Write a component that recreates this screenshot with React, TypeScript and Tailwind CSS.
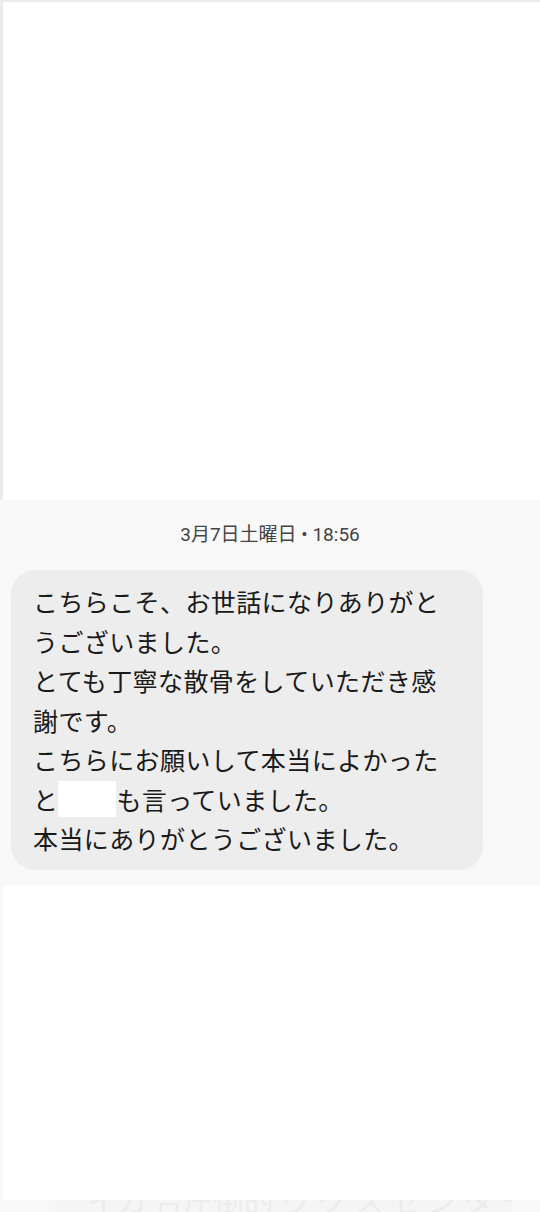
import React from "react";

const jp = { fontFamily: '"Noto Sans CJK JP", "Noto Sans", sans-serif' };
const dateFont = { fontFamily: 'Roboto, "Noto Sans CJK JP", sans-serif' };

export default function App() {
  return (
    <div className="w-[540px] h-[1212px] bg-[#f8f8f8] flex flex-col overflow-hidden" style={jp}>
      {/* top white panel */}
      <div className="h-[500px] pt-[2px] pl-[3px] bg-[#ebebeb]">
        <div className="h-full bg-white" />
      </div>

      {/* message area */}
      <div className="h-[386px] bg-[#f8f8f8] flex flex-col">
        <div className="h-[70px] flex items-center justify-center text-[19px] text-[#444444]" style={dateFont}>
          <span>3月7日土曜日 • 18:56</span>
        </div>
        <div className="pl-[11px]">
          <div className="w-[472px] h-[300px] bg-[#ededed] rounded-[24px] pl-[22px] pt-[12px] text-[25px] leading-[39.5px] text-[#1a1a1a] whitespace-nowrap tracking-[0.4px]">
            <div>こちらこそ、お世話になりありがと</div>
            <div>うございました。</div>
            <div>とても丁寧な散骨をしていただき感</div>
            <div>謝です。</div>
            <div>こちらにお願いして本当によかった</div>
            <div className="flex items-center">
              <span>と</span>
              <span className="inline-block w-[58px] h-[36px] bg-white" />
              <span>も言っていました。</span>
            </div>
            <div>本当にありがとうございました。</div>
          </div>
        </div>
      </div>

      {/* bottom white panel */}
      <div className="h-[314px] pl-[3px] bg-[#f8f8f8]">
        <div className="h-full bg-white" />
      </div>

      {/* bottom strip with faint clipped text */}
      <div className="h-[12px] bg-[#f8f8f8] overflow-hidden flex">
        <div className="ml-[55px] w-[457px] h-full bg-[#f5f5f5] overflow-hidden">
          <div className="-mt-[16px] pl-[32px] text-[30px] leading-[30px] text-[#ececec] whitespace-nowrap">
            イカ 合圧倒的 ウ ク ス セ ン タ ー セ ス
          </div>
        </div>
      </div>
    </div>
  );
}
